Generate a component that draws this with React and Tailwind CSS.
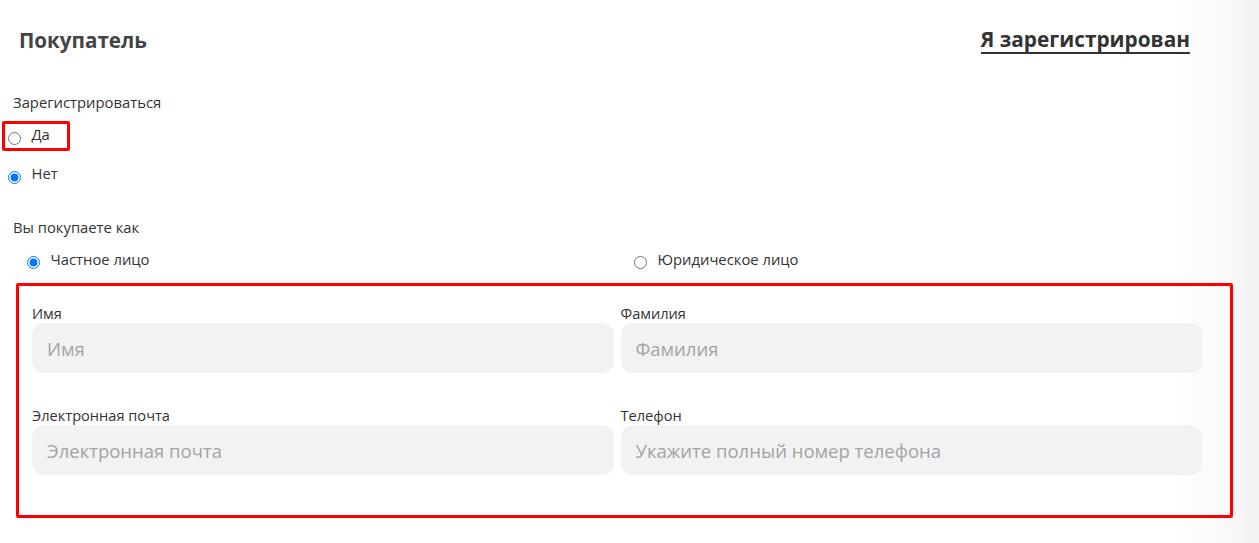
import React from 'react';

const font = { fontFamily: '"Open Sans", "Noto Sans", sans-serif' };

function Radio({ name, checked, label, boxed }) {
  return (
    <label className={`flex items-start cursor-pointer ${boxed ? 'w-[68px] h-[30px] border-[3px] border-[#f00] rounded-[2px] ml-[2px]' : ''}`}>
      <input
        type="radio"
        name={name}
        defaultChecked={checked}
        className={`m-0 w-[13px] h-[13px] mt-[7.5px] shrink-0 ${boxed ? 'ml-[2.5px]' : ''}`}
      />
      <span className="ml-[11px] text-[14.8px] leading-[20px] text-[#333]">{label}</span>
    </label>
  );
}

function Field({ label, placeholder }) {
  return (
    <div className="flex flex-col">
      <span className="text-[14.6px] leading-[20px] text-[#333]">{label}</span>
      <input
        type="text"
        placeholder={placeholder}
        className="h-[50px] w-full rounded-[12px] bg-[#f2f2f2] px-[15px] text-[18.5px] text-[#333] placeholder:text-[#a3a3a3] outline-none"
      />
    </div>
  );
}

export default function App() {
  return (
    <div className="flex w-full h-[543px] bg-white" style={font}>
      <div className="flex-1 bg-linear-to-r from-white from-[94%] to-[#f7f7f7]">
        {/* header */}
        <div className="h-[80px] flex items-center justify-between pl-[19px] pr-[55px]">
          <h2 className="text-[20.6px] font-bold text-[#444]">Покупатель</h2>
          <a href="#" className="text-[20.8px] font-bold text-[#333] border-b-2 border-[#333] leading-[25px]">
            Я зарегистрирован
          </a>
        </div>

        {/* registration */}
        <div className="mt-[12px] pl-[13px] text-[14.8px] leading-[20px] text-[#333]">Зарегистрироваться</div>
        <div className="mt-[9px]">
          <Radio name="reg" label="Да" boxed />
        </div>
        <div className="mt-[12px] pl-[7.5px]">
          <Radio name="reg" label="Нет" checked />
        </div>

        {/* buyer type */}
        <div className="mt-[33px] pl-[13px] text-[14.8px] leading-[20px] text-[#333]">Вы покупаете как</div>
        <div className="mt-[12px] grid grid-cols-2">
          <div className="pl-[26.5px]">
            <Radio name="type" label="Частное лицо" checked />
          </div>
          <div className="pl-[11px]">
            <Radio name="type" label="Юридическое лицо" />
          </div>
        </div>

        {/* fields */}
        <div className="mt-[14px] ml-[16px] mr-[12px] h-[235px] border-[3px] border-[#f00] rounded-[2px] pt-[17px] pl-[13px] pr-[28px]">
          <div className="grid grid-cols-2 gap-x-[7px] gap-y-[32px]">
            <Field label="Имя" placeholder="Имя" />
            <Field label="Фамилия" placeholder="Фамилия" />
            <Field label="Электронная почта" placeholder="Электронная почта" />
            <Field label="Телефон" placeholder="Укажите полный номер телефона" />
          </div>
        </div>
      </div>
      <div className="w-[14px] bg-[#f3f3f3]"></div>
    </div>
  );
}
